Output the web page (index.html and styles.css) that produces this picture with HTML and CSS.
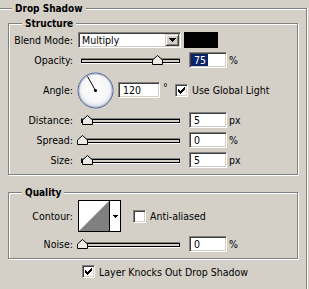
FILE: index.html
```html
<!DOCTYPE html>
<html>
<head>
<meta charset="utf-8">
<link rel="stylesheet" href="styles.css">
</head>
<body>
<div class="panel">
  <div class="title title-outer">Drop Shadow</div>

  <div class="group structure">
    <div class="title">Structure</div>
    <div class="rows">
      <div class="row">
        <span class="label">Blend Mode:</span>
        <div class="select">
          <span class="select-text">Multiply</span>
          <span class="drop-btn"><svg width="7" height="4" viewBox="0 0 7 4"><path d="M0 0h7v1H0zM1 1h5v1H1zM2 2h3v1H2zM3 3h1v1H3z" fill="#000"/></svg></span>
        </div>
        <span class="swatch"></span>
      </div>

      <div class="row">
        <span class="label">Opacity:</span>
        <div class="slider">
          <div class="track"></div>
          <svg class="thumb" style="left:74px" width="11" height="10" viewBox="0 0 11 10"><polygon points="0.5,9.5 0.5,5 5.5,0.5 10.5,5 10.5,9.5" fill="#ecebe6" stroke="#000"/></svg>
        </div>
        <div class="input"><span class="sel">75</span></div>
        <span class="unit">%</span>
      </div>

      <div class="row row-angle">
        <span class="label">Angle:</span>
        <svg class="dial" width="37" height="37" viewBox="0 0 37 37">
          <defs>
            <radialGradient id="dg" cx="50%" cy="45%" r="55%">
              <stop offset="0" stop-color="#ffffff"/>
              <stop offset="0.7" stop-color="#f6f6f8"/>
              <stop offset="1" stop-color="#d3d6e0"/>
            </radialGradient>
          </defs>
          <circle cx="18.5" cy="18.5" r="17.5" fill="url(#dg)" stroke="#4c5f8d" stroke-width="1"/>
          <circle cx="18.5" cy="18.5" r="16.5" fill="none" stroke="#aab5cf" stroke-width="1"/>
          <line x1="18.5" y1="18.5" x2="10.5" y2="4.5" stroke="#000" stroke-width="1"/>
          <circle cx="18.5" cy="18.5" r="1.6" fill="#000"/>
        </svg>
        <div class="input input-angle">120</div>
        <span class="deg">°</span>
        <span class="checkbox"><svg width="7" height="7" viewBox="0 0 7 7"><path d="M0 2h1v3H0zM1 3h1v3H1zM2 4h1v3H2zM3 3h1v3H3zM4 2h1v3H4zM5 1h1v3H5zM6 0h1v3H6z" fill="#000"/></svg></span>
        <span class="check-label">Use Global Light</span>
      </div>

      <div class="row">
        <span class="label">Distance:</span>
        <div class="slider">
          <div class="track"></div>
          <svg class="thumb" style="left:4px" width="11" height="10" viewBox="0 0 11 10"><polygon points="0.5,9.5 0.5,5 5.5,0.5 10.5,5 10.5,9.5" fill="#ecebe6" stroke="#000"/></svg>
        </div>
        <div class="input">5</div>
        <span class="unit">px</span>
      </div>

      <div class="row">
        <span class="label">Spread:</span>
        <div class="slider">
          <div class="track"></div>
          <svg class="thumb" style="left:-1px" width="11" height="10" viewBox="0 0 11 10"><polygon points="0.5,9.5 0.5,5 5.5,0.5 10.5,5 10.5,9.5" fill="#ecebe6" stroke="#000"/></svg>
        </div>
        <div class="input">0</div>
        <span class="unit">%</span>
      </div>

      <div class="row">
        <span class="label">Size:</span>
        <div class="slider">
          <div class="track"></div>
          <svg class="thumb" style="left:4px" width="11" height="10" viewBox="0 0 11 10"><polygon points="0.5,9.5 0.5,5 5.5,0.5 10.5,5 10.5,9.5" fill="#ecebe6" stroke="#000"/></svg>
        </div>
        <div class="input">5</div>
        <span class="unit">px</span>
      </div>
    </div>
  </div>

  <div class="group quality">
    <div class="title">Quality</div>
    <div class="rows rows-quality">
      <div class="row row-contour">
        <span class="label">Contour:</span>
        <div class="contour">
          <svg class="contour-preview" width="30" height="30" viewBox="0 0 30 30"><rect width="30" height="30" fill="#fff"/><polygon points="0,30 30,0 30,30" fill="#808080"/></svg>
          <span class="contour-arrow"><svg width="5" height="3" viewBox="0 0 5 3"><path d="M0 0h5v1H0zM1 1h3v1H1zM2 2h1v1H2z" fill="#000"/></svg></span>
        </div>
        <span class="checkbox cb-anti"></span>
        <span class="check-label">Anti-aliased</span>
      </div>
      <div class="row">
        <span class="label">Noise:</span>
        <div class="slider">
          <div class="track"></div>
          <svg class="thumb" style="left:-1px" width="11" height="10" viewBox="0 0 11 10"><polygon points="0.5,9.5 0.5,5 5.5,0.5 10.5,5 10.5,9.5" fill="#ecebe6" stroke="#000"/></svg>
        </div>
        <div class="input">0</div>
        <span class="unit">%</span>
      </div>
    </div>
  </div>

  <div class="knock">
    <span class="checkbox"><svg width="7" height="7" viewBox="0 0 7 7"><path d="M0 2h1v3H0zM1 3h1v3H1zM2 4h1v3H2zM3 3h1v3H3zM4 2h1v3H4zM5 1h1v3H5zM6 0h1v3H6z" fill="#000"/></svg></span>
    <span class="check-label knock-label">Layer Knocks Out Drop Shadow</span>
  </div>
</div>
</body>
</html>
```

FILE: styles.css
```css
* { box-sizing: border-box; }
html, body {
  margin: 0;
  padding: 0;
  background: #d4d0c8;
  overflow: hidden;
}
body {
  width: 309px;
  height: 289px;
  font-family: "DejaVu Sans Condensed", "Liberation Sans", sans-serif;
  font-size: 10.5px;
  color: #000;
}

.panel {
  margin-top: 8px;
  margin-right: 2px;
  height: 281px;
  border-top: 1px solid #808080;
  border-right: 1px solid #808080;
  box-shadow: inset 0 1px 0 #fff, 1px 0 0 #fff;
  padding: 0 8px;
}

.title {
  font-family: "DejaVu Sans Condensed", "Liberation Sans", sans-serif;
  font-weight: bold;
  font-size: 10px;
  line-height: 13px;
  height: 13px;
  width: fit-content;
  background: #d4d0c8;
  padding: 0 3px;
  margin: -7px 0 0 13px;
  white-space: nowrap;
}
.title-outer { margin-left: 4px; }

.group {
  border: 1px solid #808080;
  box-shadow: inset 1px 1px 0 #fff, 1px 1px 0 #fff;
  padding-bottom: 6px;
}
.structure { margin-top: 8px; }
.quality { margin-top: 17px; }

.rows {
  display: flex;
  flex-direction: column;
  gap: 4px;
  margin-top: 2px;
}
.rows-quality { margin-top: 1px; }

.row {
  display: flex;
  align-items: center;
  height: 16px;
  white-space: nowrap;
}
.row-angle { height: 36px; }
.row-contour { height: 32px; }

.label {
  flex: none;
  width: 64px;
  margin-right: 5px;
  text-align: right;
}

.select {
  flex: none;
  width: 103px;
  height: 16px;
  display: flex;
  align-items: stretch;
  background: #fff;
  border: 1px solid;
  border-color: #808080 #fff #fff #808080;
  box-shadow: inset 1px 1px 0 #404040, inset -1px -1px 0 #d4d0c8;
  padding: 1px;
}
.select-text {
  padding-left: 2px;
  line-height: 12px;
}
.drop-btn {
  margin-left: auto;
  width: 14px;
  background: #d4d0c8;
  border: 1px solid;
  border-color: #d4d0c8 #404040 #404040 #d4d0c8;
  box-shadow: inset 1px 1px 0 #fff, inset -1px -1px 0 #808080;
  display: flex;
  align-items: center;
  justify-content: center;
}
.drop-btn svg { display: block; }

.swatch {
  flex: none;
  width: 34px;
  height: 16px;
  margin-left: 3px;
  background: #000;
}

.slider {
  flex: none;
  position: relative;
  width: 105px;
  height: 16px;
}
.track {
  margin: 7px 3px 0;
  height: 4px;
  background: #d4d0c8;
  border: 1px solid #000;
  box-shadow: 0 -1px 0 #808080, 0 1px 0 #fff;
}
.thumb {
  position: absolute;
  top: 3px;
  display: block;
}

.input {
  flex: none;
  width: 38px;
  height: 16px;
  margin-left: 6px;
  background: #fff;
  border: 1px solid;
  border-color: #808080 #fff #fff #808080;
  box-shadow: inset 1px 1px 0 #404040, inset -1px -1px 0 #d4d0c8;
  padding: 1px 1px 1px 4px;
  line-height: 12px;
}
.sel {
  display: inline-block;
  height: 12px;
  margin-left: -3px;
  padding: 0 2px 0 3px;
  background: #0a246a;
  color: #fff;
}
.unit { margin-left: 2px; }

.dial {
  flex: none;
  display: block;
  margin-left: -1px;
}
.input-angle {
  width: 42px;
  margin-left: 4px;
}
.deg {
  margin-left: 3px;
  width: 12px;
  align-self: flex-start;
  margin-top: 9px;
}

.checkbox {
  flex: none;
  width: 13px;
  height: 13px;
  background: #fff;
  border: 1px solid;
  border-color: #808080 #fff #fff #808080;
  box-shadow: inset 1px 1px 0 #404040, inset -1px -1px 0 #d4d0c8;
  padding: 2px;
  display: block;
}
.checkbox svg { display: block; }
.check-label { margin-left: 4px; }

.contour {
  flex: none;
  display: flex;
  width: 43px;
  height: 32px;
  border: 1px solid #000;
  background: #fff;
}
.contour-preview {
  display: block;
  border-right: 1px solid #000;
  width: 31px;
  height: 30px;
}
.contour-arrow {
  flex: 1;
  display: flex;
  align-items: center;
  justify-content: center;
}
.contour-arrow svg { display: block; }
.cb-anti { margin-left: 12px; }

.knock {
  display: flex;
  align-items: center;
  height: 13px;
  margin-top: 6px;
  margin-left: 74px;
  white-space: nowrap;
}
```
